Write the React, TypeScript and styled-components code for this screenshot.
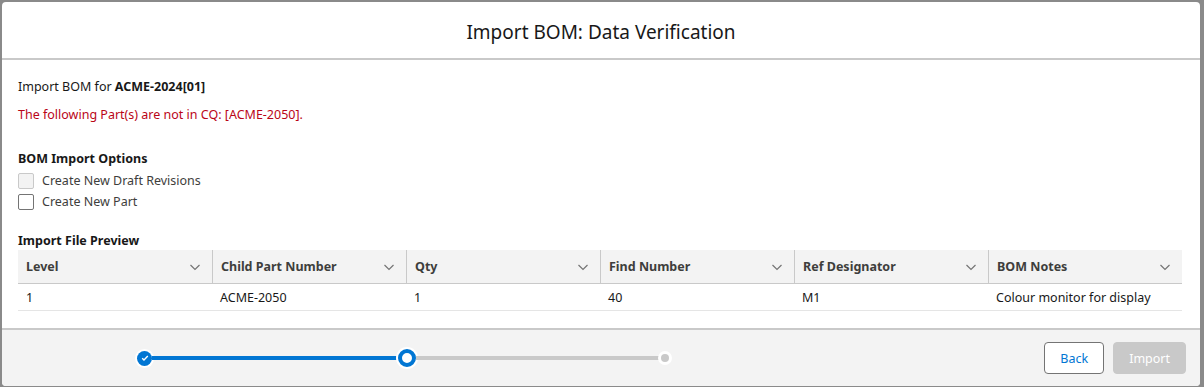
import React from 'react';
import styled, { createGlobalStyle } from 'styled-components';

const GlobalStyle = createGlobalStyle`
  html, body {
    margin: 0;
    padding: 0;
    background: #8a8a8a;
    font-family: 'Noto Sans', 'Open Sans', Arial, sans-serif;
    color: #181818;
  }
  * { box-sizing: border-box; }
`;

const colors = {
  brand: '#0176d3',
  border: '#c9c9c9',
  light: '#f3f3f3',
  error: '#ba0517',
};

const Backdrop = styled.div`
  width: 1204px;
  height: 387px;
  padding: 2px 4px 1px 2px;
`;

const Modal = styled.div`
  height: 100%;
  display: flex;
  flex-direction: column;
  background: #fff;
  border-radius: 4px;
  overflow: hidden;
`;

const Header = styled.header`
  height: 58px;
  display: flex;
  align-items: center;
  justify-content: center;
  border-bottom: 2px solid ${colors.border};
  font-size: 19px;
  font-weight: 400;
  padding-top: 4px;
`;

const Body = styled.div`
  flex: 1;
  padding: 18px 16px 0 16px;
  font-size: 12.5px;
`;

const Line = styled.p<{ $error?: boolean }>`
  margin: 0 0 11px 0;
  line-height: 17px;
  color: ${(p) => (p.$error ? colors.error : '#181818')};
`;

const SectionTitle = styled.div<{ $top: number }>`
  margin-top: ${(p) => p.$top}px;
  font-weight: 700;
  line-height: 17px;
`;

const Options = styled.div`
  margin-top: 3px;
`;

const CheckRow = styled.label`
  display: flex;
  align-items: center;
  gap: 8px;
  height: 21px;
  color: #3e3e3c;
`;

const Box = styled.span<{ $disabled?: boolean }>`
  width: 16px;
  height: 16px;
  border-radius: 2px;
  border: 1px solid ${(p) => (p.$disabled ? colors.border : '#747474')};
  background: ${(p) => (p.$disabled ? colors.light : '#fff')};
`;

const Table = styled.div`
  margin: 1px 2px 0 0;
  display: grid;
  grid-template-columns: repeat(6, 1fr);
`;

const HeadCell = styled.div`
  height: 34px;
  display: flex;
  align-items: center;
  justify-content: space-between;
  padding: 0 10px 0 8px;
  background: ${colors.light};
  border-bottom: 1px solid ${colors.border};
  font-weight: 700;
  color: #3e3e3c;
  & + & {
    border-left: 1px solid ${colors.border};
  }
`;

const Cell = styled.div`
  height: 27px;
  display: flex;
  align-items: center;
  padding: 0 8px;
  border-bottom: 1px solid #e5e5e5;
`;

const Footer = styled.footer`
  height: 58px;
  display: flex;
  align-items: center;
  justify-content: space-between;
  border-top: 2px solid ${colors.border};
  background: ${colors.light};
  padding: 0 14px 0 135px;
`;

const Progress = styled.div`
  width: 532px;
  display: flex;
  align-items: center;
`;

const Track = styled.div<{ $done?: boolean }>`
  flex: 1;
  height: 4px;
  background: ${(p) => (p.$done ? colors.brand : colors.border)};
`;

const StepDone = styled.span`
  width: 15px;
  height: 15px;
  border-radius: 50%;
  background: ${colors.brand};
  box-shadow: 0 0 0 2px #fff;
  display: flex;
  align-items: center;
  justify-content: center;
`;

const StepActive = styled.span`
  width: 18px;
  height: 18px;
  border-radius: 50%;
  background: #fff;
  border: 4px solid ${colors.brand};
  box-shadow: 0 0 0 2px #fff;
`;

const StepTodo = styled.span`
  width: 8px;
  height: 8px;
  border-radius: 50%;
  background: ${colors.border};
  box-shadow: 0 0 0 3px #fff;
`;

const Buttons = styled.div`
  display: flex;
  gap: 9px;
`;

const Button = styled.button<{ $disabled?: boolean }>`
  height: 32px;
  padding: 0 15px;
  border-radius: 4px;
  font-family: inherit;
  font-size: 12.5px;
  border: 1px solid ${(p) => (p.$disabled ? colors.border : '#747474')};
  background: ${(p) => (p.$disabled ? colors.border : '#fff')};
  color: ${(p) => (p.$disabled ? '#fff' : colors.brand)};
`;

const Chevron = () => (
  <svg width="14" height="14" viewBox="0 0 14 14" fill="none">
    <path d="M2.5 5l4.5 4.5L11.5 5" stroke="#747474" strokeWidth="1.2" />
  </svg>
);

const columns = ['Level', 'Child Part Number', 'Qty', 'Find Number', 'Ref Designator', 'BOM Notes'];
const row = ['1', 'ACME-2050', '1', '40', 'M1', 'Colour monitor for display'];

export default function App() {
  return (
    <Backdrop>
      <GlobalStyle />
      <Modal>
        <Header>Import BOM: Data Verification</Header>
        <Body>
          <Line>
            Import BOM for <b>ACME-2024[01]</b>
          </Line>
          <Line $error>The following Part(s) are not in CQ: [ACME-2050].</Line>
          <SectionTitle $top={27}>BOM Import Options</SectionTitle>
          <Options>
            <CheckRow>
              <Box $disabled />
              Create New Draft Revisions
            </CheckRow>
            <CheckRow>
              <Box />
              Create New Part
            </CheckRow>
          </Options>
          <SectionTitle $top={20}>Import File Preview</SectionTitle>
          <Table>
            {columns.map((c) => (
              <HeadCell key={c}>
                {c}
                <Chevron />
              </HeadCell>
            ))}
            {row.map((v, i) => (
              <Cell key={i}>{v}</Cell>
            ))}
          </Table>
        </Body>
        <Footer>
          <Progress>
            <StepDone>
              <svg width="8" height="8" viewBox="0 0 8 8">
                <path d="M1.2 4.2l1.8 1.8L6.8 2" stroke="#fff" strokeWidth="1.4" fill="none" />
              </svg>
            </StepDone>
            <Track $done />
            <StepActive />
            <Track />
            <StepTodo />
          </Progress>
          <Buttons>
            <Button>Back</Button>
            <Button $disabled>Import</Button>
          </Buttons>
        </Footer>
      </Modal>
    </Backdrop>
  );
}
